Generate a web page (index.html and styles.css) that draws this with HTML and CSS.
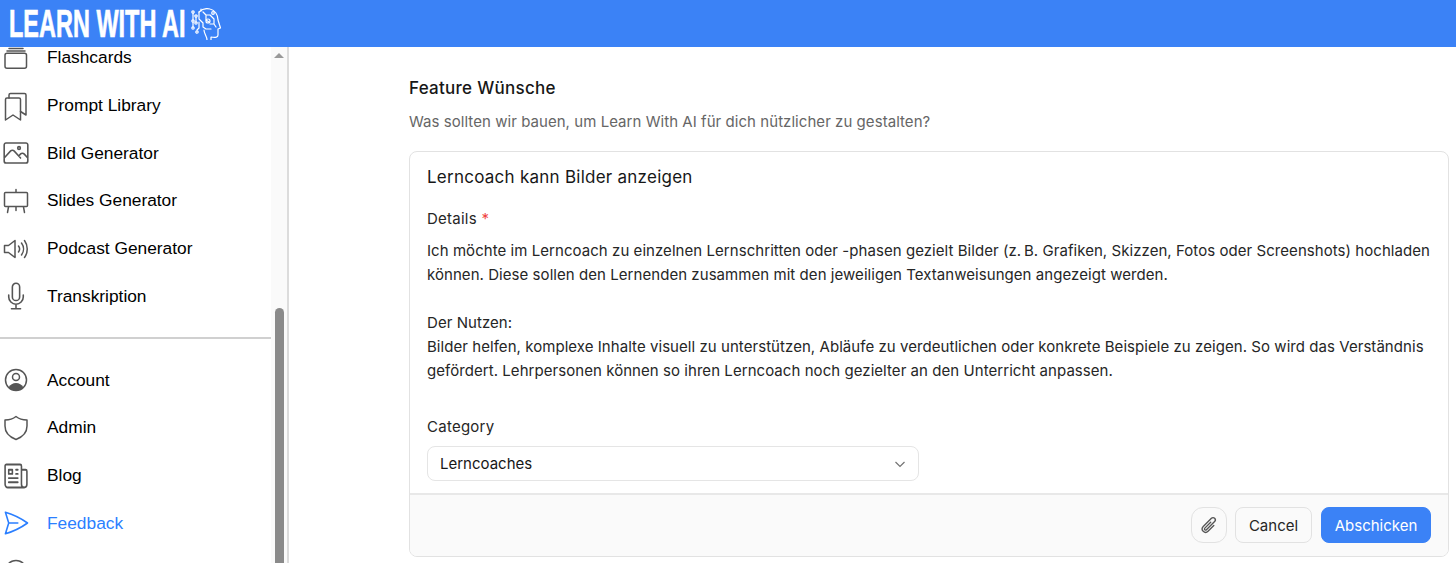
FILE: index.html
```html
<!DOCTYPE html>
<html lang="de">
<head>
<meta charset="utf-8">
<title>Learn With AI – Feedback</title>
<link rel="stylesheet" href="styles.css">
</head>
<body>
<header class="topbar">
  <span class="logo-text">LEARN WITH AI</span>
  <svg class="logo-icon" viewBox="0 0 30 32" fill="none" stroke="#fff" stroke-width="1.200" stroke-linecap="round" stroke-linejoin="round">
    <path d="M8 4C11 1 15 0 19 1c5 1 8 6 8 11l2.500 8-2.500 1v6c0 2-2 3-7 2v3"/>
    <path d="M13 22c0 4 3 6 3 10"/>
    <path d="M8 4v7l4 4v4l3 2h5M12 4l3 3h4l4 4v5M15 7v5l3 2M19 16h4l2 3M10 1v2M8 14v6l-2 2"/>
    <circle cx="17" cy="13" r="2"/><circle cx="22" cy="5" r="1.300"/>
    <circle cx="2" cy="4" r="1.200"/><circle cx="5" cy="8" r="1.200"/><circle cx="2" cy="13" r="1.200"/><circle cx="5" cy="15" r="1.200"/><circle cx="2" cy="20" r="1.200"/><circle cx="6" cy="24" r="1.200"/>
    <path d="M2 5v7M2 14v5M5 9v5"/>
  </svg>
</header>
<div class="layout">
  <aside class="sidebar">
    <div class="nav-scroll">
      <ul class="nav-list nav-first">
        <li class="nav-item">
          <svg class="icon" viewBox="0 0 32 32"><path class="thick" d="M9 6.500h14M7 9h18"/><rect class="thick" x="5" y="11.200" width="21.500" height="15" rx="2"/></svg>
          <span>Flashcards</span>
        </li>
        <li class="nav-item">
          <svg class="icon" viewBox="0 0 32 32"><path class="thick" d="M5.500 9.500A1.500 1.500 0 0 1 7 8h12a1.500 1.500 0 0 1 1.500 1.500V30L13 25l-7.500 5z"/><path class="thick" d="M9 8V5a1.500 1.500 0 0 1 1.500-1.500h14A1.500 1.500 0 0 1 26 5v20l-5.500-3.500"/></svg>
          <span>Prompt Library</span>
        </li>
        <li class="nav-item">
          <svg class="icon" viewBox="-1.200 0 26.400 24" preserveAspectRatio="none"><path d="m2.250 15.750 5.159-5.159a2.250 2.250 0 0 1 3.182 0l5.159 5.159m-1.500-1.500 1.409-1.409a2.250 2.250 0 0 1 3.182 0l2.909 2.909m-18 3.750h16.500a1.500 1.500 0 0 0 1.500-1.500V6a1.500 1.500 0 0 0-1.500-1.500H3.750A1.500 1.500 0 0 0 2.250 6v12a1.500 1.500 0 0 0 1.500 1.500Z"/><circle cx="14.500" cy="8.250" r="1.100"/></svg>
          <span>Bild Generator</span>
        </li>
        <li class="nav-item">
          <svg class="icon" viewBox="0 0 32 32"><path class="thick" d="M16 4.500v3M5.500 7.500h21a1 1 0 0 1 1 1v12a1 1 0 0 1-1 1h-21a1 1 0 0 1-1-1v-12a1 1 0 0 1 1-1zM8.500 22l-1 5.500M23.500 22l1 5.500M16 22v3.500"/></svg>
          <span>Slides Generator</span>
        </li>
        <li class="nav-item">
          <svg class="icon" viewBox="0 0 32 32"><path class="thick" d="M4.500 12.500h4l6.500-5v17l-6.500-5h-4zM18.500 13a5 5 0 0 1 0 6M21.500 10a10 10 0 0 1 0 12M24.500 7.500a14.500 14.500 0 0 1 0 17"/></svg>
          <span>Podcast Generator</span>
        </li>
        <li class="nav-item">
          <svg class="icon" viewBox="-1.200 -1.200 26.400 26.400"><path d="M12 18.750a6 6 0 0 0 6-6v-1.500m-6 7.500a6 6 0 0 1-6-6v-1.500m6 7.500v3.750m-3.750 0h7.500M12 15.750a3 3 0 0 1-3-3V4.500a3 3 0 1 1 6 0v8.250a3 3 0 0 1-3 3Z"/></svg>
          <span>Transkription</span>
        </li>
      </ul>
      <div class="nav-divider"></div>
      <ul class="nav-list">
        <li class="nav-item">
          <svg class="icon" viewBox="0 0 32 32"><circle class="thick" cx="16" cy="16" r="10.500"/><circle class="thick" cx="16" cy="13" r="3.500"/><path class="solid" d="M8.500 23.500c1.500-3 4.500-4.500 7.500-4.500s6 1.500 7.500 4.500a10.500 10.500 0 0 1-15 0z"/></svg>
          <span>Account</span>
        </li>
        <li class="nav-item">
          <svg class="icon" viewBox="0 0 32 32"><path class="thick" d="M16 4.500c3 2.500 7 3.500 11 3.500v6c0 6.500-4.500 11-11 13.500C9.500 25 5 20.500 5 14V8c4 0 8-1 11-3.500z"/></svg>
          <span>Admin</span>
        </li>
        <li class="nav-item">
          <svg class="icon" viewBox="-1.200 .5 26.400 23" preserveAspectRatio="none"><path d="M12 7.500h1.500m-1.500 3h1.500m-7.500 3h7.500m-7.500 3h7.500m3-9h3.375c.621 0 1.125.504 1.125 1.125V18a2.250 2.250 0 0 1-2.250 2.250M16.500 7.500V18a2.250 2.250 0 0 0 2.250 2.250M16.500 7.500V4.875c0-.621-.504-1.125-1.125-1.125H4.125C3.504 3.750 3 4.254 3 4.875V18a2.250 2.250 0 0 0 2.250 2.250h13.500M6 7.500h3v3H6v-3Z"/></svg>
          <span>Blog</span>
        </li>
        <li class="nav-item nav-active">
          <svg class="icon" viewBox="-1.200 -1.200 26.400 26.400"><path d="M6 12 3.269 3.125A59.769 59.769 0 0 1 21.485 12 59.768 59.768 0 0 1 3.270 20.875L5.999 12Zm0 0h7.500"/></svg>
          <span>Feedback</span>
        </li>
        <li class="nav-item">
          <svg class="icon" viewBox="0 0 32 32"><circle class="thick" cx="16" cy="16" r="10.500"/></svg>
        </li>
      </ul>
    </div>
    <div class="scroll-track">
      <div class="scroll-arrow"></div>
      <div class="scroll-thumb"></div>
    </div>
  </aside>
  <main class="content">
    <h1 class="page-title">Feature Wünsche</h1>
    <p class="page-sub">Was sollten wir bauen, um Learn With AI für dich nützlicher zu gestalten?</p>
    <section class="card">
      <div class="card-body">
        <h2 class="card-title">Lerncoach kann Bilder anzeigen</h2>
        <div class="field-label">Details <span class="req">*</span></div>
        <div class="details">
          <p>Ich möchte im Lerncoach zu einzelnen Lernschritten oder -phasen gezielt Bilder (z.&#8201;B. Grafiken, Skizzen, Fotos oder Screenshots) hochladen können. Diese sollen den Lernenden zusammen mit den jeweiligen Textanweisungen angezeigt werden.</p>
          <p>Der Nutzen:<br>Bilder helfen, komplexe Inhalte visuell zu unterstützen, Abläufe zu verdeutlichen oder konkrete Beispiele zu zeigen. So wird das Verständnis gefördert. Lehrpersonen können so ihren Lerncoach noch gezielter an den Unterricht anpassen.</p>
        </div>
        <div class="field-label cat-label">Category</div>
        <div class="select">
          <span>Lerncoaches</span>
          <svg class="chevron" viewBox="0 0 12 12"><path d="M1.500 4 6 8.500 10.500 4"/></svg>
        </div>
      </div>
      <div class="card-foot">
        <button class="btn btn-attach" type="button" aria-label="Anhang">
          <svg class="clip" viewBox="0 0 24 24"><path d="m18.375 12.739-7.693 7.693a4.500 4.500 0 0 1-6.364-6.364l10.940-10.940A3 3 0 1 1 19.500 7.372L8.552 18.320m.009-.01-.01.01m5.699-9.941-7.810 7.810a1.500 1.500 0 0 0 2.112 2.130"/></svg>
        </button>
        <button class="btn btn-cancel" type="button">Cancel</button>
        <button class="btn btn-send" type="button">Abschicken</button>
      </div>
    </section>
  </main>
</div>
</body>
</html>
```

FILE: styles.css
```css
* { box-sizing: border-box; }
html, body { margin: 0; height: 563px; overflow: hidden; background: #fff; }
body { font-family: Inter, "Liberation Sans", sans-serif; color: #171717; display: flex; flex-direction: column; }
ul { list-style: none; margin: 0; padding: 0; }
h1, h2, p { margin: 0; }

.topbar { height: 47px; flex: none; background: #3b82f6; display: flex; align-items: center; padding-left: 9px; overflow: hidden; position: relative; z-index: 1; }
.logo-text { font-family: "Liberation Sans", sans-serif; font-weight: 700; font-size: 39px; line-height: 47px; color: #fff; white-space: nowrap; -webkit-text-stroke: .7px #fff; transform: scaleX(.602); transform-origin: left center; margin-right: -116px; }
.logo-icon { width: 30px; height: 32px; margin-left: 5px; flex: none; }

.layout { flex: 1; display: flex; min-height: 0; }
.sidebar { width: 289px; flex: none; display: flex; border-right: 2px solid #dcdcdc; overflow: hidden; }
.nav-scroll { width: 271px; flex: none; font-family: "Liberation Sans", Arial, sans-serif; font-size: 17.330px; color: #000; }
.nav-first { margin-top: -13px; }
.nav-item { height: 47.700px; display: flex; align-items: center; gap: 15px; }
.nav-active { color: #2b7fff; }
.icon { width: 32px; height: 32px; flex: none; fill: none; stroke: #555; stroke-width: 1.300; stroke-linejoin: round; stroke-linecap: round; }
.icon .thick { stroke-width: 1.500; }
.icon .solid { fill: #555; stroke: none; }
.nav-active .icon { stroke: #2b7fff; }
.nav-divider { height: 2px; background: #d0d0d0; margin: 17px 0 17.300px; }

.scroll-track { width: 16px; flex: none; background: #fafafa; display: flex; flex-direction: column; align-items: center; padding-top: 6px; }
.scroll-arrow { width: 0; height: 0; border-left: 5px solid transparent; border-right: 5px solid transparent; border-bottom: 5px solid #999; }
.scroll-thumb { width: 9px; flex: 1; margin-top: 250px; margin-bottom: -10px; background: #8a8a8a; border-radius: 5px; }

.content { flex: 1; padding: 30px 7px 0 120px; min-width: 0; }
.page-title { font-size: 17px; font-weight: 500; letter-spacing: .27px; line-height: 22px; color: #171717; }
.page-sub { font-size: 15px; letter-spacing: .05px; line-height: 20px; color: #666; margin-top: 13px; }

.card { margin-top: 19px; height: 406px; border: 1px solid #e2e2e2; border-radius: 8px; display: flex; flex-direction: column; overflow: hidden; }
.card-body { flex: 1; padding: 13px 17px 0; }
.card-title { font-size: 17px; font-weight: 400; letter-spacing: .25px; line-height: 24px; }
.field-label { font-size: 15px; font-weight: 400; letter-spacing: .25px; line-height: 20px; margin-top: 20px; color: #262626; }
.req { color: #ef4444; }
.details { font-size: 15px; letter-spacing: .055px; line-height: 24px; color: #262626; margin-top: 10px; }
.details p + p { margin-top: 24px; }
.cat-label { margin-top: 34px; }
.select { width: 492px; height: 35px; margin-top: 9px; border: 1px solid #e5e5e5; border-radius: 8px; display: flex; align-items: center; justify-content: space-between; padding: 0 12px; font-size: 15px; }
.chevron { width: 12px; height: 12px; fill: none; stroke: #737373; stroke-width: 1.200; }

.card-foot { height: 63px; flex: none; background: #fafafa; border-top: 2px solid #e8e8e8; display: flex; align-items: center; justify-content: flex-end; gap: 8px; padding: 0 17px 1px; }
.btn { height: 36px; border-radius: 8px; font-family: inherit; font-size: 15px; font-weight: 400; padding: 0 14px; border: 1px solid #e2e2e2; background: #fff; color: #262626; }
.btn-attach { width: 36px; padding: 0; border-radius: 12px; background: #fafafa; display: flex; align-items: center; justify-content: center; }
.btn-cancel { width: 77px; padding: 0; background: #fafafa; }
.btn-send { width: 110px; padding: 0; margin-left: 1px; background: #3b82f6; border-color: #3b82f6; color: #fff; }
.clip { width: 18px; height: 18px; fill: none; stroke: #555; stroke-width: 1.800; stroke-linecap: round; stroke-linejoin: round; }
```
